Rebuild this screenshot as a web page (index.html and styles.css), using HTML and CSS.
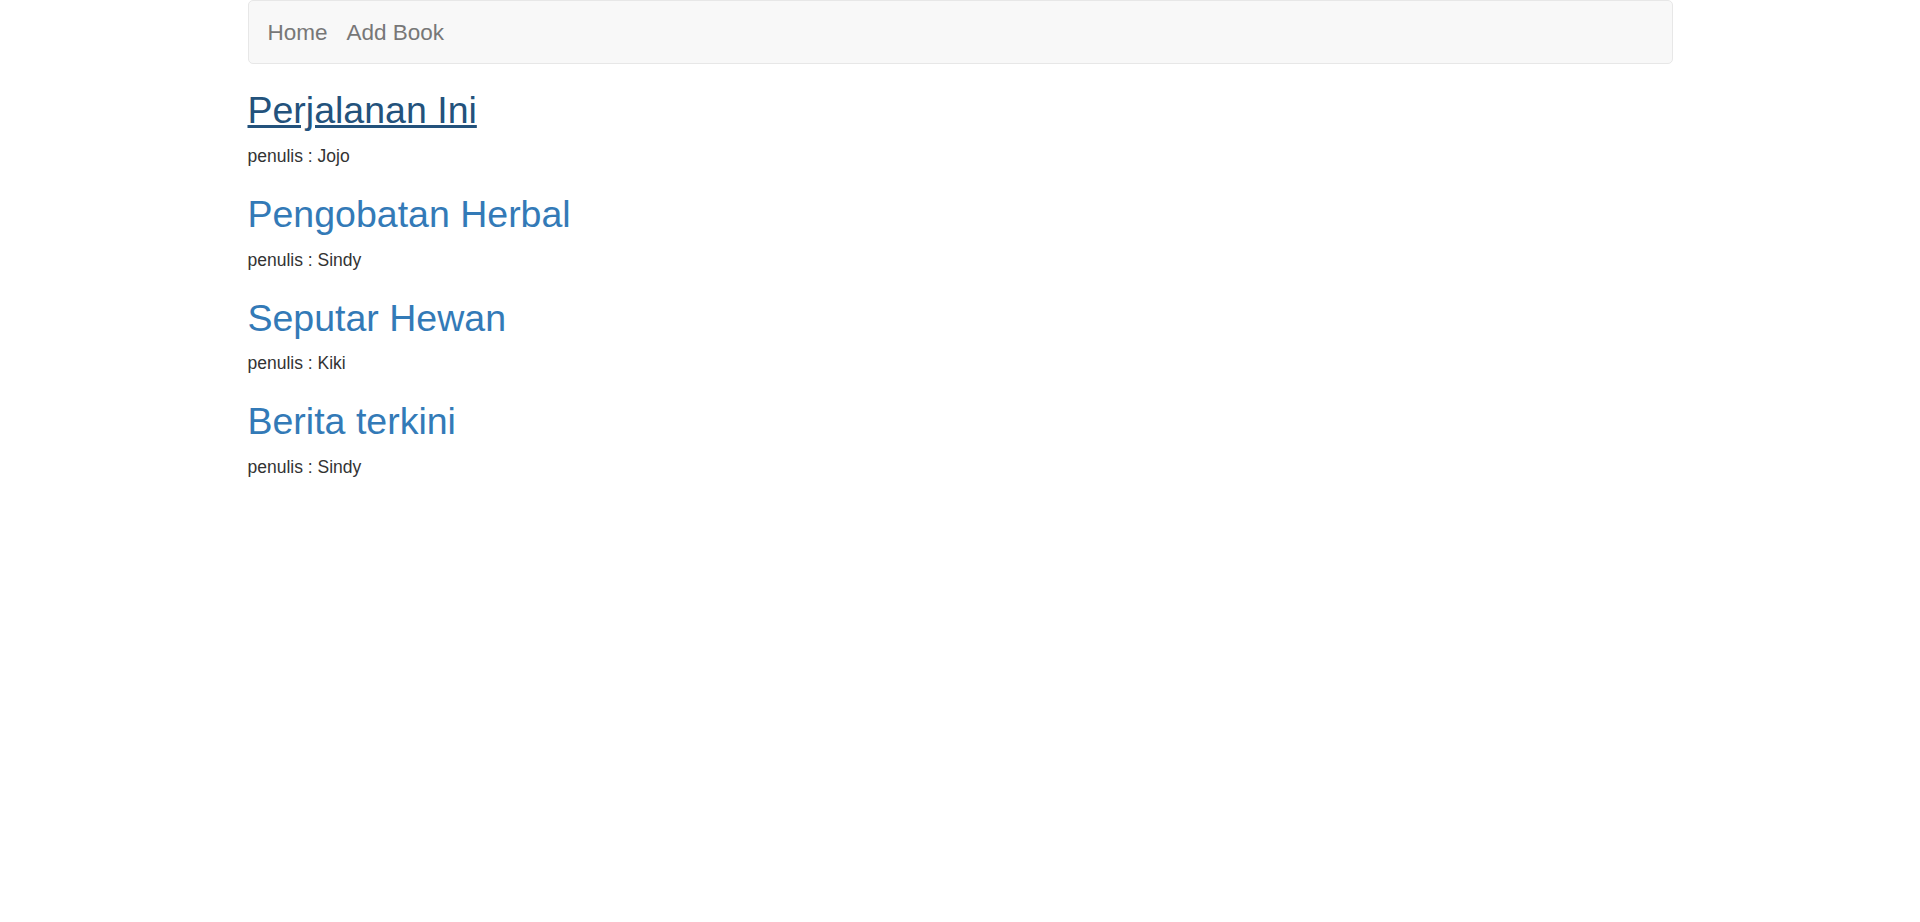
FILE: index.html
```html
<!DOCTYPE html>
<html lang="id">
<head>
<meta charset="utf-8">
<title>Books</title>
<link rel="stylesheet" href="styles.css">
</head>
<body>
<div class="container">
  <nav class="navbar">
    <a class="nav-link" href="#">Home</a>
    <a class="nav-link" href="#">Add Book</a>
  </nav>
  <div class="book">
    <h2 class="book-title"><a class="book-link is-active" href="#">Perjalanan Ini</a></h2>
    <p class="book-author">penulis : Jojo</p>
  </div>
  <div class="book">
    <h2 class="book-title"><a class="book-link" href="#">Pengobatan Herbal</a></h2>
    <p class="book-author">penulis : Sindy</p>
  </div>
  <div class="book">
    <h2 class="book-title"><a class="book-link" href="#">Seputar Hewan</a></h2>
    <p class="book-author">penulis : Kiki</p>
  </div>
  <div class="book">
    <h2 class="book-title"><a class="book-link" href="#">Berita terkini</a></h2>
    <p class="book-author">penulis : Sindy</p>
  </div>
</div>
</body>
</html>
```
FILE: styles.css
```css
html, body {
  margin: 0;
  padding: 0;
  background: #fff;
}
body {
  font-family: "Liberation Sans", Arial, Helvetica, sans-serif;
  font-size: 17.5px;
  line-height: 25px;
  color: #333;
}
.container {
  width: 1425px;
  margin: 0 auto;
}
.navbar {
  box-sizing: border-box;
  height: 64px;
  margin-bottom: 26px;
  background: #f8f8f8;
  border: 1px solid #e7e7e7;
  border-radius: 5px;
  display: flex;
  gap: 19px;
  padding: 19px 0 0 19px;
}
.nav-link {
  font-size: 22.5px;
  line-height: 25px;
  color: #777;
  text-decoration: none;
}
.book {
  display: block;
}
.book-title {
  font-size: 37.5px;
  line-height: 41.25px;
  font-weight: 500;
  margin: 25px 0 12.5px;
}
.book-link {
  color: #337ab7;
  text-decoration: none;
}
.book-link.is-active {
  color: #23527c;
  text-decoration: underline;
}
.book-author {
  margin: 0 0 12.5px;
}
```
